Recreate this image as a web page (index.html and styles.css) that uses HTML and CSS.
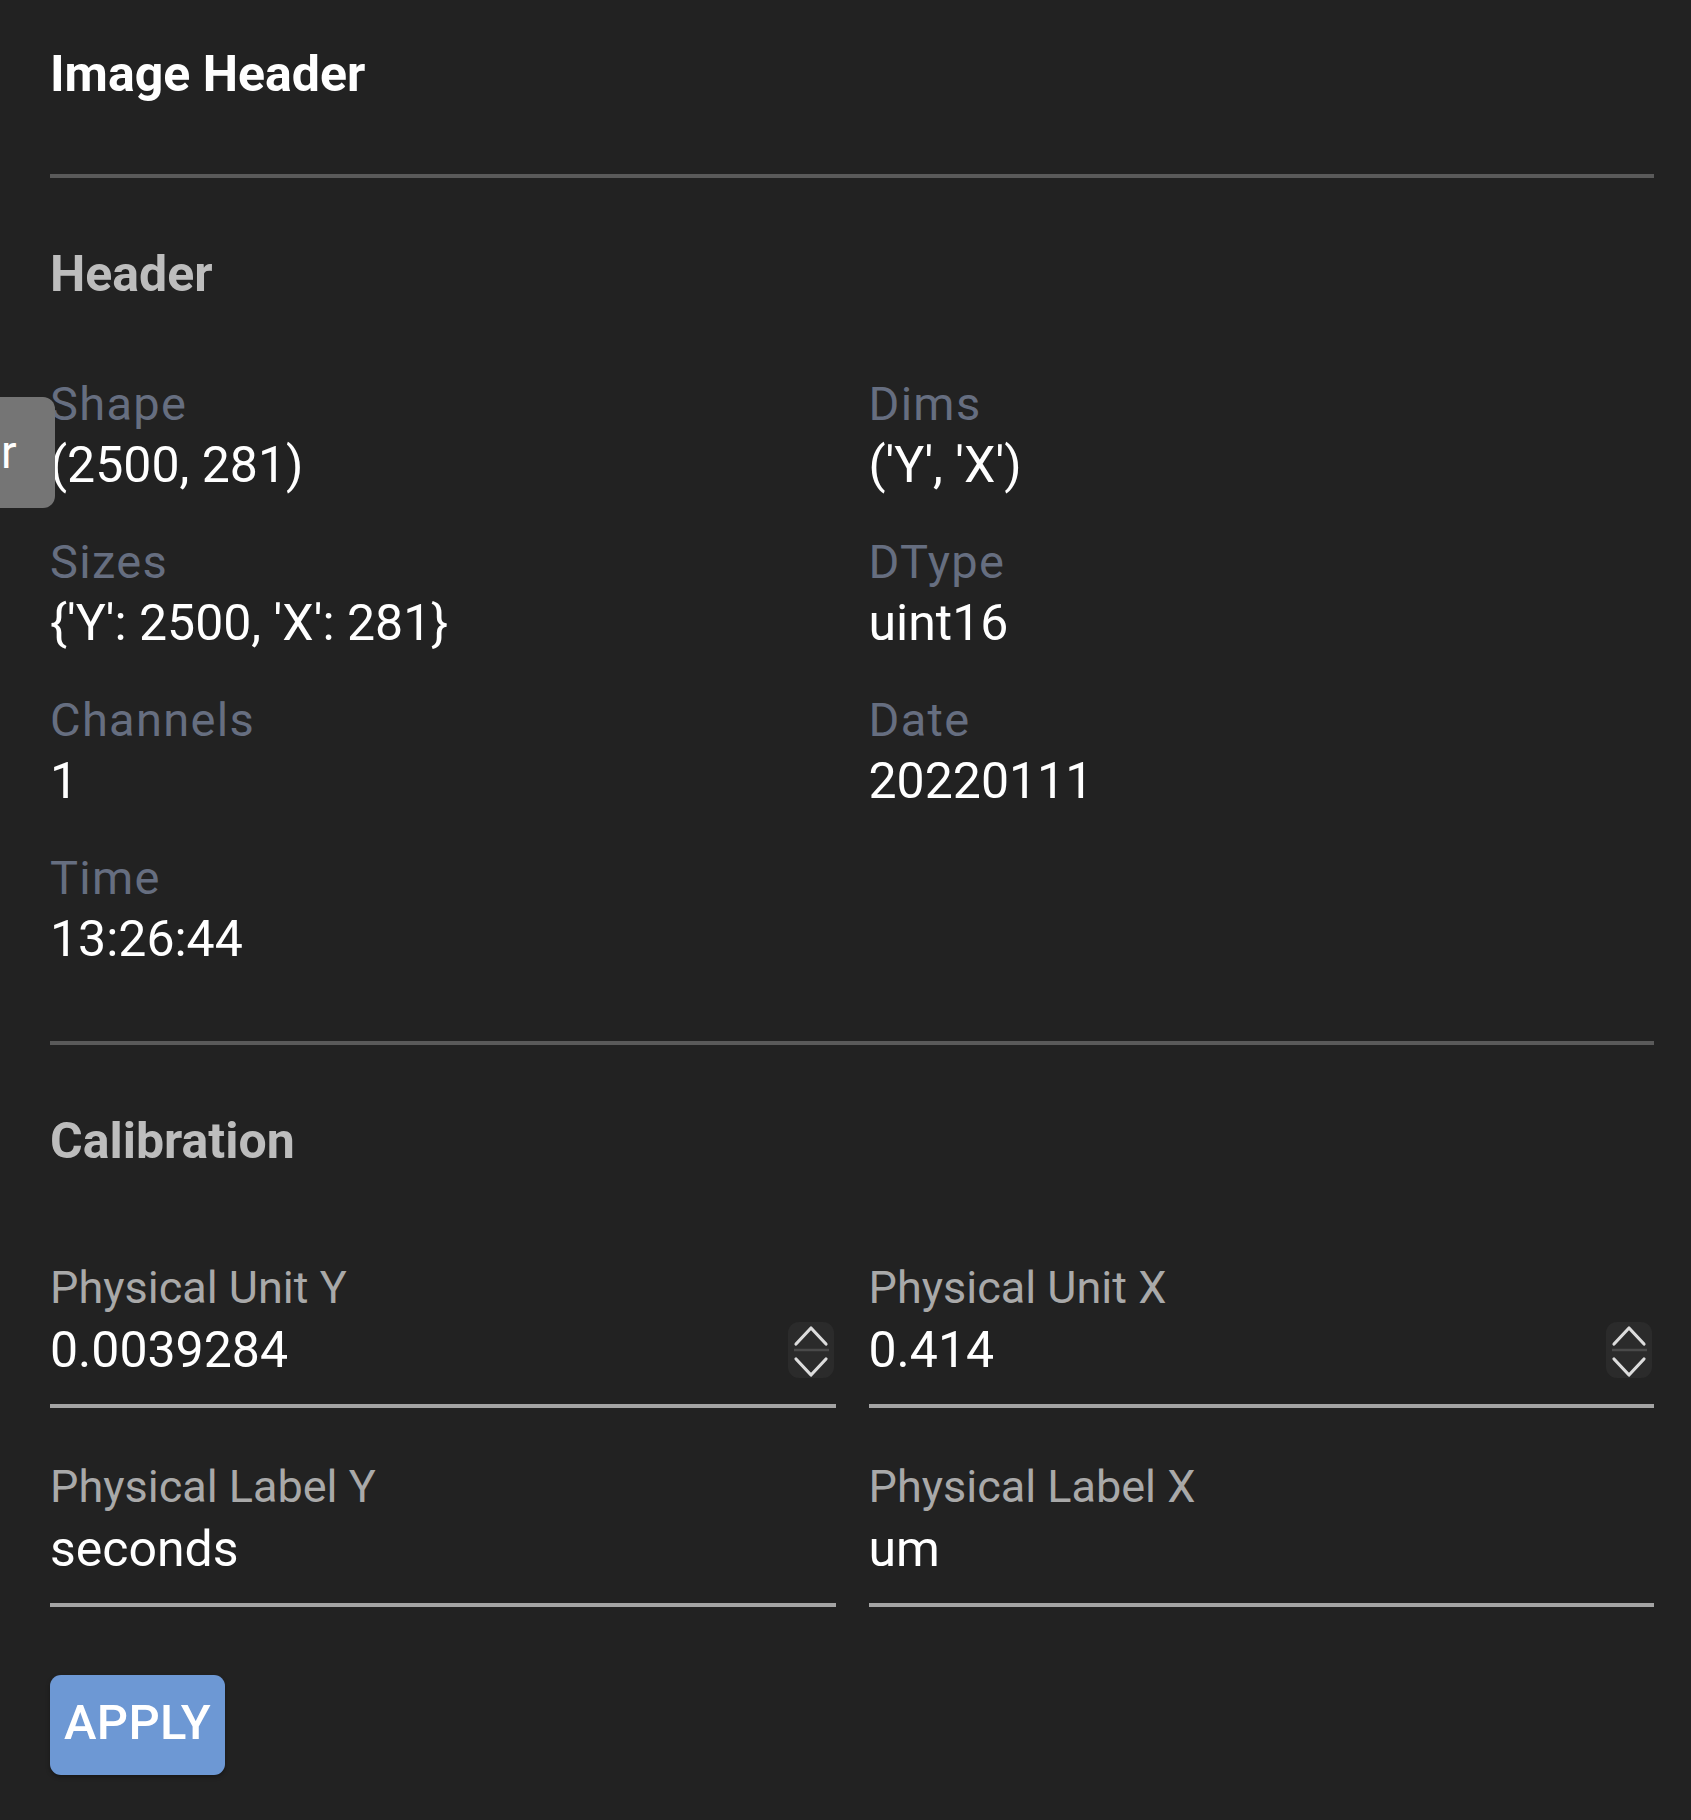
FILE: index.html
```html
<!DOCTYPE html>
<html lang="en">
<head>
<meta charset="utf-8">
<title>Image Header</title>
<link rel="stylesheet" href="styles.css">
</head>
<body>
<div class="side-tab"><span class="side-tab-text">r</span></div>
<main class="panel">
  <h1 class="panel-title">Image Header</h1>
  <hr class="divider divider-top">

  <h2 class="section-title">Header</h2>
  <div class="info-grid">
    <div class="info-item"><div class="info-label">Shape</div><div class="info-value">(2500, 281)</div></div>
    <div class="info-item"><div class="info-label">Dims</div><div class="info-value">('Y', 'X')</div></div>
    <div class="info-item"><div class="info-label">Sizes</div><div class="info-value">{'Y': 2500, 'X': 281}</div></div>
    <div class="info-item"><div class="info-label">DType</div><div class="info-value">uint16</div></div>
    <div class="info-item"><div class="info-label">Channels</div><div class="info-value">1</div></div>
    <div class="info-item"><div class="info-label">Date</div><div class="info-value">20220111</div></div>
    <div class="info-item"><div class="info-label">Time</div><div class="info-value">13:26:44</div></div>
  </div>

  <hr class="divider divider-mid">

  <h2 class="section-title">Calibration</h2>
  <div class="field-grid">
    <div class="field">
      <div class="field-label">Physical Unit Y</div>
      <div class="field-row">
        <span class="field-value">0.0039284</span>
        <span class="spinner">
          <svg width="46" height="56" viewBox="0 0 46 56"><path d="M8 22 L23 6 L38 22" fill="none" stroke="#dcdcdc" stroke-width="3.2" stroke-linecap="round" stroke-linejoin="round"/><line x1="6" y1="28" x2="41" y2="28" stroke="#4a4a4a" stroke-width="2.5"/><path d="M8 37 L23 53 L38 37" fill="none" stroke="#dcdcdc" stroke-width="3.2" stroke-linecap="round" stroke-linejoin="round"/></svg>
        </span>
      </div>
    </div>
    <div class="field">
      <div class="field-label">Physical Unit X</div>
      <div class="field-row">
        <span class="field-value">0.414</span>
        <span class="spinner">
          <svg width="46" height="56" viewBox="0 0 46 56"><path d="M8 22 L23 6 L38 22" fill="none" stroke="#dcdcdc" stroke-width="3.2" stroke-linecap="round" stroke-linejoin="round"/><line x1="6" y1="28" x2="41" y2="28" stroke="#4a4a4a" stroke-width="2.5"/><path d="M8 37 L23 53 L38 37" fill="none" stroke="#dcdcdc" stroke-width="3.2" stroke-linecap="round" stroke-linejoin="round"/></svg>
        </span>
      </div>
    </div>
    <div class="field">
      <div class="field-label">Physical Label Y</div>
      <div class="field-row"><span class="field-value">seconds</span></div>
    </div>
    <div class="field">
      <div class="field-label">Physical Label X</div>
      <div class="field-row"><span class="field-value">um</span></div>
    </div>
  </div>

  <button class="apply-btn" type="button">APPLY</button>
</main>
</body>
</html>
```

FILE: styles.css
```css
html, body {
  margin: 0;
  padding: 0;
  background: #222222;
}

body {
  font-family: Roboto, "Noto Sans", "Liberation Sans", sans-serif;
  color: #ffffff;
  min-height: 1820px;
  position: relative;
}

.panel {
  padding: 44px 37px 40px 50px;
}

.panel-title {
  margin: 0;
  font-size: 50px;
  line-height: 60px;
  font-weight: 700;
  color: #ffffff;
}

.divider {
  border: 0;
  height: 4px;
  margin: 0;
  background: #5a5a5a;
}

.divider-top {
  margin-top: 70px;
}

.section-title {
  margin: 66px 0 0;
  font-size: 50px;
  line-height: 60px;
  font-weight: 700;
  color: #bdbdbd;
}

.info-grid {
  margin-top: 70px;
  display: grid;
  grid-template-columns: 1fr 1fr;
  column-gap: 33px;
  row-gap: 36px;
}

.info-label {
  font-size: 47px;
  line-height: 60px;
  letter-spacing: 1.3px;
  color: #666e80;
}

.info-value {
  font-size: 50px;
  line-height: 62px;
  color: #ffffff;
}

.divider-mid {
  margin-top: 71px;
}

.field-grid {
  margin-top: 87px;
  display: grid;
  grid-template-columns: 1fr 1fr;
  column-gap: 33px;
  row-gap: 49px;
}

.field {
  border-bottom: 4px solid #a4a4a4;
  padding-bottom: 24px;
}

.field-label {
  font-size: 45px;
  line-height: 60px;
  color: #a9a9a9;
  margin-bottom: 2px;
}

.field-row {
  display: flex;
  align-items: center;
  justify-content: space-between;
  height: 60px;
}

.field-value {
  font-size: 50px;
  line-height: 60px;
  color: #ffffff;
}

.spinner {
  width: 46px;
  height: 56px;
  margin-right: 2px;
  border-radius: 11px;
  background: #2b2b2b;
  display: flex;
}

.apply-btn {
  margin-top: 68px;
  width: 175px;
  height: 100px;
  padding: 0 0 6px;
  border: 0;
  border-radius: 11px;
  background: #6d98d4;
  color: #ffffff;
  font-family: Roboto, "Noto Sans", "Liberation Sans", sans-serif;
  font-size: 49px;
  font-weight: 500;
  letter-spacing: 0.3px;
  box-shadow: 0 2px 4px rgba(0, 0, 0, 0.35);
}

.side-tab {
  position: absolute;
  left: 0;
  top: 397px;
  width: 55px;
  height: 111px;
  background: #757575;
  border-radius: 0 12px 12px 0;
  overflow: hidden;
}

.side-tab-text {
  display: block;
  font-size: 46px;
  line-height: 111px;
  color: #ffffff;
  padding-left: 1px;
}
```
